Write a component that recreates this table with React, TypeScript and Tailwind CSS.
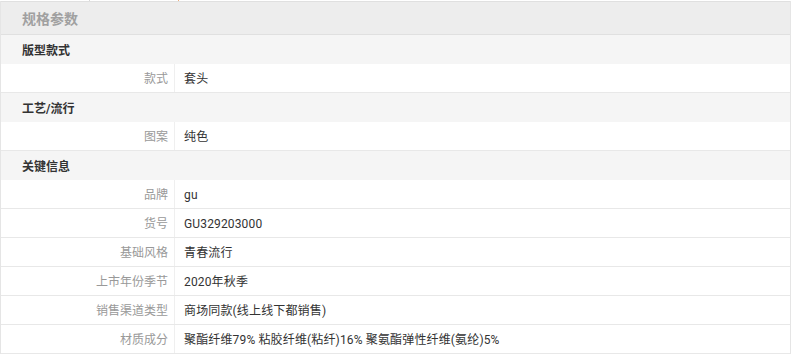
import React from "react";

type Row = { label: string; value: string };
type Section = { title: string; rows: Row[] };

const sections: Section[] = [
  { title: "版型款式", rows: [{ label: "款式", value: "套头" }] },
  { title: "工艺/流行", rows: [{ label: "图案", value: "纯色" }] },
  {
    title: "关键信息",
    rows: [
      { label: "品牌", value: "gu" },
      { label: "货号", value: "GU329203000" },
      { label: "基础风格", value: "青春流行" },
      { label: "上市年份季节", value: "2020年秋季" },
      { label: "销售渠道类型", value: "商场同款(线上线下都销售)" },
      { label: "材质成分", value: "聚酯纤维79% 粘胶纤维(粘纤)16% 聚氨酯弹性纤维(氨纶)5%" },
    ],
  },
];

export default function App() {
  return (
    <div
      className="w-[795px] h-[359px] bg-white"
      style={{ fontFamily: 'Roboto, "Noto Sans CJK SC", "Noto Sans", sans-serif' }}
    >
      <div className="flex h-[1px]">
        <div className="ml-[89px] w-[1px] h-[1px] bg-[#d8d8d8]" />
        <div className="ml-[88px] w-[1px] h-[1px] bg-[#f0b080]" />
      </div>
      <div className="w-[791px] border-l border-r border-[#e5e5e5]">
        <div className="h-[34px] border-t border-b border-[#e0e0e0] bg-[#ededed] flex items-center pl-[21px] pt-[2px]">
          <span className="text-[14px] font-bold text-[#a0a0a0]">规格参数</span>
        </div>
        {sections.map((s) => (
          <div key={s.title}>
            <div className="h-[29px] bg-[#f5f5f5] flex items-center pl-[21px] pt-[2px]">
              <span className="text-[12px] font-bold text-[#333]">{s.title}</span>
            </div>
            {s.rows.map((r) => (
              <div key={r.label} className="h-[29px] flex border-b border-[#e8e8e8] bg-white">
                <div className="w-[174px] border-r border-[#efefef] flex items-center justify-end pr-[6px] pt-[2px] text-[12px] text-[#999]">
                  {r.label}
                </div>
                <div className="flex-1 flex items-center pl-[9px] pt-[2px] text-[12px] text-[#333] tracking-[0.15px]">
                  {r.value}
                </div>
              </div>
            ))}
          </div>
        ))}
      </div>
    </div>
  );
}
